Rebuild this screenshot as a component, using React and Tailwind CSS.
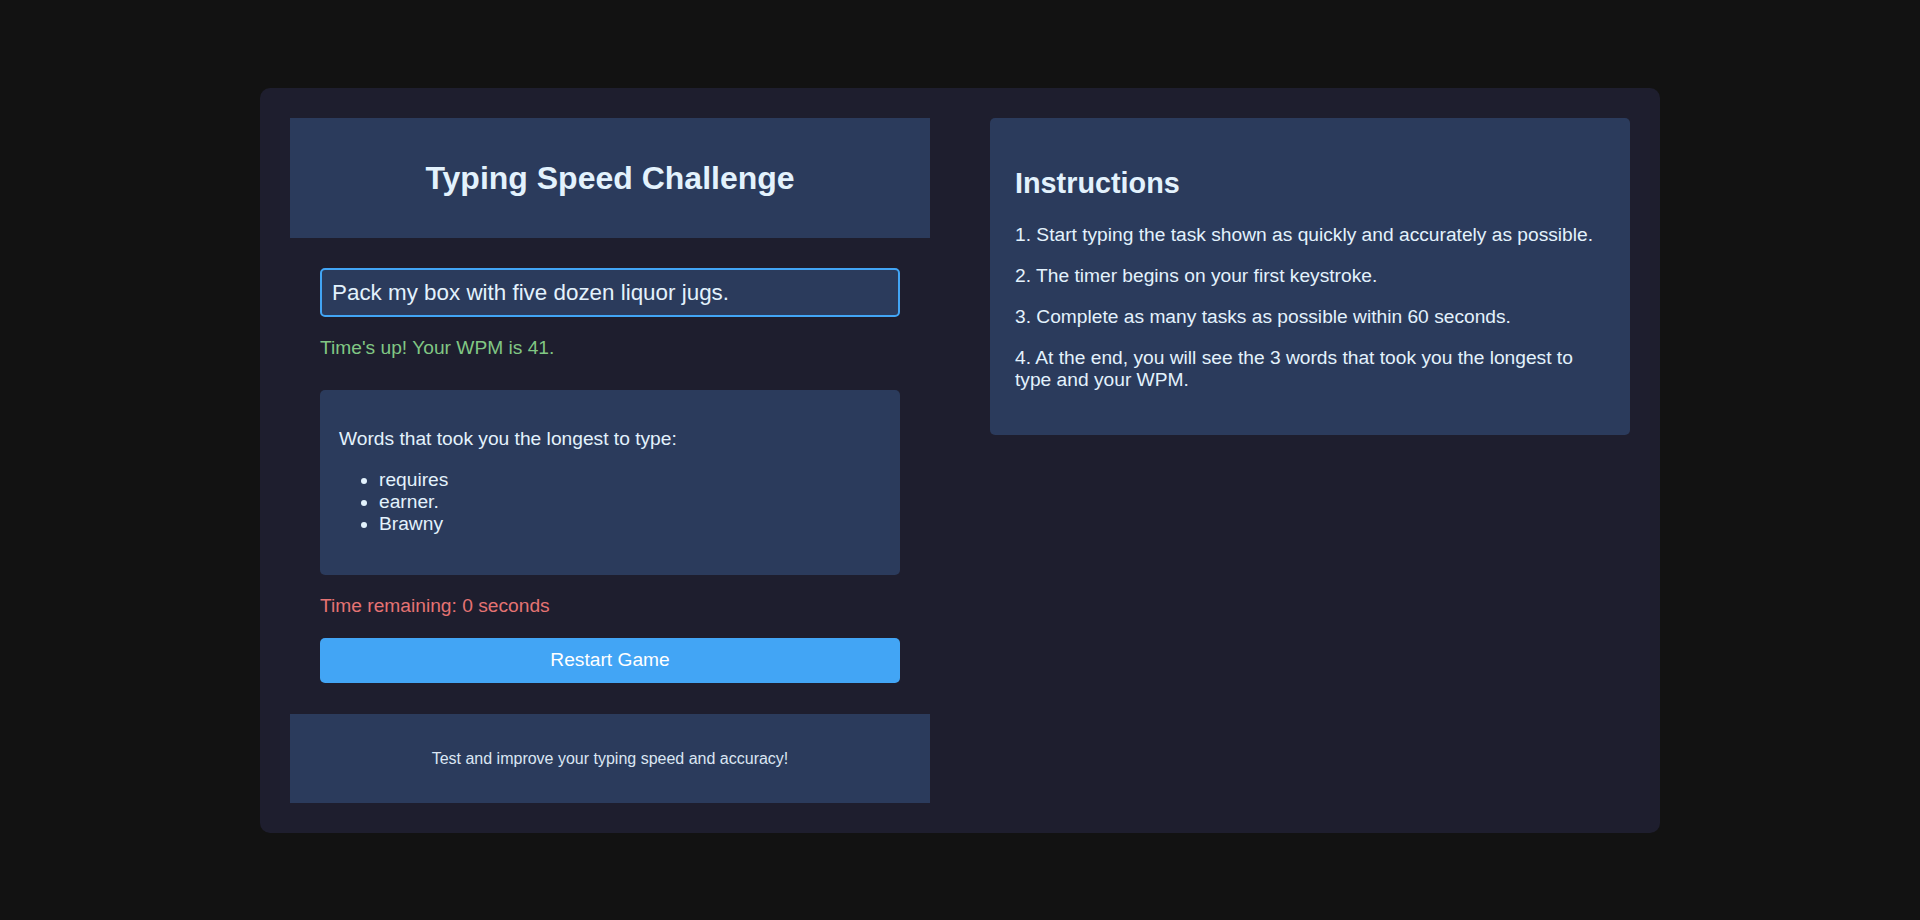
import React from "react";

const font = { fontFamily: '"Liberation Sans", Arial, sans-serif' };

const slowWords = ["requires", "earner.", "Brawny"];

const steps = [
  "1. Start typing the task shown as quickly and accurately as possible.",
  "2. The timer begins on your first keystroke.",
  "3. Complete as many tasks as possible within 60 seconds.",
  "4. At the end, you will see the 3 words that took you the longest to type and your WPM.",
];

function Game() {
  return (
    <div className="w-[640px] flex flex-col shrink-0">
      <header className="h-[120px] bg-[#2b3b5c] flex items-center justify-center">
        <h1 className="text-[32px] leading-[37px] font-bold text-[#e3f2fd]">
          Typing Speed Challenge
        </h1>
      </header>

      <div className="px-[30px] pt-[30px] pb-[31px] flex flex-col">
        <input
          readOnly
          value="Pack my box with five dozen liquor jugs."
          className="h-[49px] w-full bg-[#2b3b5c] border-2 border-[#42a5f5] rounded-[5px] px-[10px] text-[22.4px] text-[#e3f2fd] outline-none"
          style={font}
        />
        <p className="mt-[20px] text-[19.2px] leading-[22px] text-[#81c784]">
          Time's up! Your WPM is 41.
        </p>

        <div className="mt-[31px] bg-[#2b3b5c] rounded-[5px] px-[19px] pt-[38px] pb-[40px] text-[#e3f2fd]">
          <p className="text-[19.2px] leading-[22px]">
            Words that took you the longest to type:
          </p>
          <ul className="mt-[19px] pl-[40px] list-disc text-[19.2px] leading-[22px]">
            {slowWords.map((w) => (
              <li key={w}>{w}</li>
            ))}
          </ul>
        </div>

        <p className="mt-[20px] text-[19.2px] leading-[22px] text-[#e57373]">
          Time remaining: 0 seconds
        </p>

        <button
          className="mt-[21px] h-[45px] w-full bg-[#42a5f5] rounded-[5px] text-white text-[19.2px]"
          style={font}
        >
          Restart Game
        </button>
      </div>

      <footer className="h-[89px] bg-[#2b3b5c] flex items-center justify-center">
        <p className="text-[16px] leading-[18px] text-[#dbe6f3]">
          Test and improve your typing speed and accuracy!
        </p>
      </footer>
    </div>
  );
}

function Instructions() {
  return (
    <div className="w-[640px] shrink-0 bg-[#2b3b5c] rounded-[5px] pt-[49px] pb-[44px] px-[25px] text-[#e3f2fd]">
      <h2 className="text-[28.8px] leading-[33px] font-bold">Instructions</h2>
      <div className="mt-[24px] flex flex-col gap-[19px]">
        {steps.map((s) => (
          <p key={s} className="text-[19.2px] leading-[22px]">
            {s}
          </p>
        ))}
      </div>
    </div>
  );
}

export default function App() {
  return (
    <div className="min-h-screen bg-[#121212] flex justify-center pt-[88px]" style={font}>
      <div className="w-[1400px] h-[745px] bg-[#1e1e2e] rounded-[10px] p-[30px] flex items-start gap-[60px]">
        <Game />
        <Instructions />
      </div>
    </div>
  );
}
